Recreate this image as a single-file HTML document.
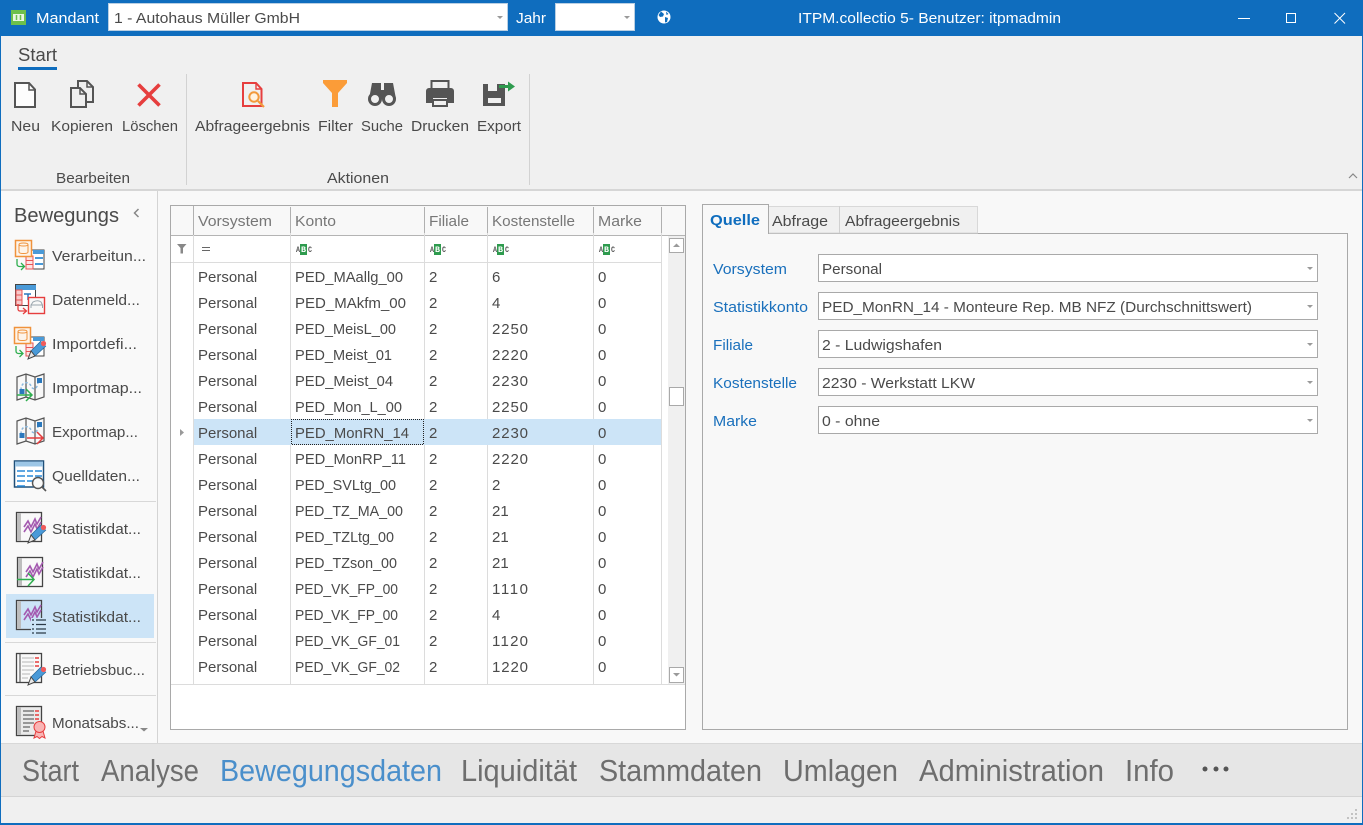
<!DOCTYPE html>
<html lang="de"><head><meta charset="utf-8"><title>ITPM.collectio 5</title>
<style>
html,body{margin:0;padding:0;background:#f8f8f8;overflow:hidden}
svg{display:block;font-family:"Liberation Sans",sans-serif;font-size:15px}
text{fill:#4a4a4a}
.h text{fill:#777}
.b text{fill:#1a70bc}
.w text{fill:#fff}
.n text{font-size:31px;fill:#6e6e6e}
.m text{font-family:"Liberation Mono",monospace;font-size:8px;font-weight:bold;fill:#555}
</style></head><body>
<svg width="1363" height="825" viewBox="0 0 1363 825" xmlns="http://www.w3.org/2000/svg">
<defs>
<path id="tri" d="M0 0h6l-3 3z" fill="#9a9a9a"/>
<g id="pencil"><path d="M1 16l2-6L13 0l5 5L7 15z" fill="#4a9ad8"/><path d="M3 10l10-10M7 15l11-10" stroke="#2a6a9e" stroke-width=".8" fill="none"/><path d="M0 18l3-8 4 5z" fill="#e8e8e8" stroke="#444" stroke-width="1"/><circle cx="15.500" cy="2.500" r="2.600" fill="#f05a5a"/></g>
<g id="chart"><path d="M1 12l4-6 3 6 4-8 2 5 4-7" fill="none" stroke="#a45ab0" stroke-width="1.600"/><path d="M1 17l4-6 3 6 4-8 2 5 4-7" fill="none" stroke="#a45ab0" stroke-width="1.600"/></g>
<g id="map"><path d="M1 4l9-3 9 3 9-3v23l-9 3-9-3-9 3z" fill="#f8f8f8" stroke="#555" stroke-width="1.200"/><path d="M10 1v23M19 4v23" stroke="#555" stroke-width="1.200"/><path d="M5 17c0-9 8-9 10-4s7 3 7-5" fill="none" stroke="#8ab8de" stroke-width="1.500" stroke-dasharray="2.500 2"/><rect x="3.500" y="16" width="5" height="5" fill="#2a78bd"/><rect x="21" y="5" width="5" height="5" fill="#2a78bd"/></g>
</defs>

<!-- chrome -->
<rect width="1363" height="825" fill="#0f6dbe"/>
<rect x="1" y="36" width="1361" height="787" fill="#f8f8f8"/>
<rect x="1" y="36" width="1361" height="153" fill="#f0f0f0"/>
<rect x="1" y="189" width="1361" height="2" fill="#d6d6d6"/>

<!-- title bar -->
<rect x="11" y="10" width="15" height="15" fill="#6dc04b"/>
<rect x="13" y="14" width="11" height="7" fill="#e9f6e2"/><path d="M16.500 15v5M20.500 15v5" stroke="#6dc04b" stroke-width="1.500"/>
<g class="w"><text x="36" y="23" textLength="63" lengthAdjust="spacingAndGlyphs">Mandant</text><text x="516" y="23" textLength="30" lengthAdjust="spacingAndGlyphs">Jahr</text>
<text x="798" y="23" textLength="263" lengthAdjust="spacingAndGlyphs">ITPM.collectio 5- Benutzer: itpmadmin</text></g>
<rect x="108.500" y="3.500" width="399" height="27" fill="#fff" stroke="#b9cfe3"/>
<text x="114" y="23" textLength="186" lengthAdjust="spacingAndGlyphs">1 - Autohaus Müller GmbH</text>
<use href="#tri" x="497" y="16"/>
<rect x="555.500" y="3.500" width="79" height="27" fill="#fff" stroke="#b9cfe3"/>
<use href="#tri" x="624" y="16"/>
<circle cx="664" cy="17" r="6.500" fill="#fff"/>
<path d="M661 11.500l3 2.500-1 2.500-3 .5-1.500-2zM665 17l3 1-1 4-2 .5zM666 11.500l2.500 2.500-2 1z" fill="#0f6dbe"/>
<path d="M1238 18.500h12" stroke="#fff"/>
<rect x="1286.500" y="13.500" width="9" height="9" fill="none" stroke="#fff"/>
<path d="M1334.500 13l10.500 10.500M1345 13l-10.500 10.500" stroke="#fff" fill="none"/>

<!-- ribbon -->
<text x="18" y="61" style="font-size:18px" textLength="39" lengthAdjust="spacingAndGlyphs">Start</text>
<rect x="18" y="67" width="39" height="3" fill="#0f6dbe"/>
<rect x="186" y="74" width="1" height="111" fill="#d2d2d2"/>
<rect x="529" y="74" width="1" height="111" fill="#d2d2d2"/>
<g>
<text x="11" y="131" textLength="29" lengthAdjust="spacingAndGlyphs">Neu</text>
<text x="51" y="131" textLength="62" lengthAdjust="spacingAndGlyphs">Kopieren</text>
<text x="122" y="131" textLength="56" lengthAdjust="spacingAndGlyphs">Löschen</text>
<text x="195" y="131" textLength="115" lengthAdjust="spacingAndGlyphs">Abfrageergebnis</text>
<text x="318" y="131" textLength="35" lengthAdjust="spacingAndGlyphs">Filter</text>
<text x="361" y="131" textLength="42" lengthAdjust="spacingAndGlyphs">Suche</text>
<text x="411" y="131" textLength="58" lengthAdjust="spacingAndGlyphs">Drucken</text>
<text x="477" y="131" textLength="44" lengthAdjust="spacingAndGlyphs">Export</text>
<text x="56" y="183" textLength="74" lengthAdjust="spacingAndGlyphs">Bearbeiten</text>
<text x="327" y="183" textLength="62" lengthAdjust="spacingAndGlyphs">Aktionen</text>
</g>
<!-- new -->
<path d="M15 83h14l6 6.500V107H15z" fill="#fdfdfd" stroke="#555" stroke-width="2"/><path d="M29 83v7h6" fill="none" stroke="#555" stroke-width="1.500"/>
<!-- copy -->
<path d="M78 81h9l6 6v15H78z" fill="#f0f0f0" stroke="#555" stroke-width="2"/><path d="M87 81v6h6" fill="none" stroke="#555" stroke-width="1.500"/>
<path d="M71 88h9l6 6v13H71z" fill="#f0f0f0" stroke="#555" stroke-width="2"/><path d="M80 88v6h6" fill="none" stroke="#555" stroke-width="1.500"/>
<!-- delete -->
<path d="M138.500 84.500l21 21M159.500 84.500l-21 21" stroke="#e63e3e" stroke-width="3.600" fill="none"/>
<!-- query result -->
<path d="M243 83h13l5.500 6v17H243z" fill="none" stroke="#e63e3e" stroke-width="2"/><path d="M256 83v6h5.500" fill="none" stroke="#e63e3e" stroke-width="1.400"/>
<circle cx="254" cy="97" r="4.700" fill="#fff3e0" stroke="#f29a3c" stroke-width="2"/><path d="M258 101l6 6" stroke="#f29a3c" stroke-width="2.200"/>
<!-- filter -->
<path d="M323 80h24v3l-9 10v14h-6V93l-9-10z" fill="#fb9c38"/>
<!-- binoculars -->
<path d="M372 83h9v7h3v-7h9l3 16h-27z" fill="#555"/>
<circle cx="375" cy="99" r="5.500" fill="#f0f0f0" stroke="#555" stroke-width="3"/><circle cx="389" cy="99" r="5.500" fill="#f0f0f0" stroke="#555" stroke-width="3"/>
<!-- printer -->
<rect x="431.500" y="81" width="17" height="8" fill="none" stroke="#555" stroke-width="2"/>
<path d="M429 88h22a3 3 0 0 1 3 3v12h-7v-5h-14v5h-7V91a3 3 0 0 1 3-3z" fill="#555"/>
<rect x="433" y="100" width="14" height="6" fill="none" stroke="#555" stroke-width="2"/>
<!-- export -->
<path d="M483 84h22v22h-22zM488 84v7h9v-7zM488 98v5h13v-5z" fill="#555" fill-rule="evenodd"/>
<path d="M499 85h9v-3.500l7 5-7 5V88h-9z" fill="#2e9b4e"/>
<path d="M1349 178l4-4 4 4" fill="none" stroke="#888" stroke-width="1.200"/>

<!-- sidebar -->
<rect x="1" y="191" width="156" height="552" fill="#f9f9f9"/>
<rect x="157" y="191" width="1" height="552" fill="#d4d4d4"/>
<text x="14" y="222" style="font-size:20px" textLength="105" lengthAdjust="spacingAndGlyphs">Bewegungs</text>
<path d="M138.500 209l-4 4 4 4" fill="none" stroke="#888" stroke-width="1.500"/>
<rect x="5" y="501" width="151" height="1" fill="#d8d8d8"/>
<rect x="5" y="642" width="151" height="1" fill="#d8d8d8"/>
<rect x="5" y="695" width="151" height="1" fill="#d8d8d8"/>
<rect x="6" y="594" width="148" height="44" fill="#cce4f7"/>
<g>
<text x="52" y="261" textLength="94" lengthAdjust="spacingAndGlyphs">Verarbeitun...</text>
<text x="52" y="305" textLength="88" lengthAdjust="spacingAndGlyphs">Datenmeld...</text>
<text x="52" y="349" textLength="85" lengthAdjust="spacingAndGlyphs">Importdefi...</text>
<text x="52" y="393" textLength="90" lengthAdjust="spacingAndGlyphs">Importmap...</text>
<text x="52" y="437" textLength="86" lengthAdjust="spacingAndGlyphs">Exportmap...</text>
<text x="52" y="481" textLength="88" lengthAdjust="spacingAndGlyphs">Quelldaten...</text>
<text x="52" y="534" textLength="89" lengthAdjust="spacingAndGlyphs">Statistikdat...</text>
<text x="52" y="578" textLength="89" lengthAdjust="spacingAndGlyphs">Statistikdat...</text>
<text x="52" y="622" textLength="89" lengthAdjust="spacingAndGlyphs">Statistikdat...</text>
<text x="52" y="675" textLength="93" lengthAdjust="spacingAndGlyphs">Betriebsbuc...</text>
<text x="52" y="728" textLength="87" lengthAdjust="spacingAndGlyphs">Monatsabs...</text>
</g>
<path d="M140 728h8l-4 3.500z" fill="#888"/>

<!-- icon 1 Verarbeitung -->
<g fill="none">
<rect x="26" y="250" width="18" height="19" fill="#fff" stroke="#444"/><rect x="33" y="250" width="11" height="4" fill="#4a9ad8"/>
<rect x="26" y="256" width="7" height="13" fill="#fde4e4" stroke="#e85555"/><path d="M26 260.500h7M26 264.500h7" stroke="#e85555"/>
<path d="M35 258h8M35 264h8" stroke="#4a9ad8" stroke-width="2"/>
<rect x="15.500" y="240.500" width="16" height="16" fill="#fdf4ea" stroke="#f0923b" stroke-width="1.500"/>
<path d="M19 244.500c0-2 9-2 9 0v7.500c0 2-9 2-9 0zM19 244.500c0 2 9 2 9 0" stroke="#f0923b"/>
<path d="M17 259v5c0 1.500 1 2.500 2.500 2.500H24M21 263l3.500 3.500L21 270" stroke="#2fae4f" stroke-width="1.300"/>
</g>
<!-- icon 2 Datenmeld -->
<g fill="none">
<rect x="15.500" y="284.500" width="20" height="21" fill="#fff" stroke="#444"/><rect x="16" y="285" width="20" height="5" fill="#4a9ad8"/>
<rect x="16" y="290" width="6" height="15" fill="#f7c9c9" stroke="#e85555"/><path d="M16 295h6M16 300h6" stroke="#e85555"/>
<path d="M24 294h7M28 294v6" stroke="#2a78bd" stroke-width="1.500"/>
<rect x="28.500" y="297.500" width="16" height="16" fill="#f8f8f8" stroke="#e63e3e" stroke-width="1.400"/>
<path d="M31 308v-3l2-3c3-1.500 6-1.500 8 0l1.500 3v3M31 305h11.500" stroke="#9aa6ae"/>
<path d="M18 304v5c0 1 .8 2 2 2h6M23 308l3.500 3-3.500 3" stroke="#e63e3e" stroke-width="1.300"/>
</g>
<!-- icon 3 Importdef -->
<g fill="none">
<rect x="26" y="337" width="18" height="19" fill="#fff" stroke="#444"/><rect x="33" y="337" width="11" height="4" fill="#4a9ad8"/>
<rect x="26" y="343" width="7" height="13" fill="#fde4e4" stroke="#e85555"/><path d="M26 347.500h7M26 351.500h7" stroke="#e85555"/>
<rect x="14.500" y="327.500" width="16" height="16" fill="#fdf4ea" stroke="#f0923b" stroke-width="1.500"/>
<path d="M18 331.500c0-2 9-2 9 0v7.500c0 2-9 2-9 0zM18 331.500c0 2 9 2 9 0" stroke="#f0923b"/>
<path d="M16 346v5c0 1.500 1 2.500 2.500 2.500H23M19.500 350l3.500 3.500-3.500 3.500" stroke="#2fae4f" stroke-width="1.300"/>
</g>
<use href="#pencil" x="28" y="341"/>
<!-- icon 4 Importmap -->
<use href="#map" x="16" y="373"/>
<path d="M17 395h14M26 389l6 6-6 6" fill="none" stroke="#2fae4f" stroke-width="1.500"/>
<!-- icon 5 Exportmap -->
<use href="#map" x="16" y="417"/>
<path d="M27 438h15M37 432l6 6-6 6" fill="none" stroke="#e63e3e" stroke-width="1.500"/>
<!-- icon 6 Quelldaten -->
<rect x="14.500" y="461" width="29" height="26" fill="#fff" stroke="#1f4f78" stroke-width="1.500"/>
<rect x="15" y="461.500" width="28" height="5" fill="#9cc6e6"/>
<path d="M17 471h8M27 471h6M35 471h7M17 476h8M27 476h6M35 476h7M17 481h8M27 481h6M17 486h8" stroke="#2a8ad8" stroke-width="1.500" fill="none"/>
<circle cx="38" cy="483" r="5.500" fill="#f9f9f9" stroke="#555" stroke-width="1.400"/><path d="M42 487l4 4" stroke="#555" stroke-width="1.600"/>
<!-- icon 7 -->
<rect x="16.500" y="512.500" width="25" height="29" fill="#f9f9f9" stroke="#444" stroke-width="1.300"/><rect x="17" y="513" width="4" height="28" fill="#bdbdbd"/>
<use href="#chart" x="23" y="515"/><use href="#pencil" x="28" y="525"/>
<!-- icon 8 -->
<rect x="17.500" y="557.500" width="25" height="29" fill="#f9f9f9" stroke="#444" stroke-width="1.300"/><rect x="18" y="558" width="4" height="28" fill="#bdbdbd"/>
<use href="#chart" x="25" y="560"/>
<path d="M17 579.500h16M28 573l6 6.500-6 6.500" fill="none" stroke="#2fae4f" stroke-width="1.500"/>
<!-- icon 9 -->
<rect x="16.500" y="600.500" width="25" height="29" fill="#cce4f7" stroke="#444" stroke-width="1.300"/><rect x="17" y="601" width="4" height="28" fill="#bdbdbd"/>
<use href="#chart" x="23" y="603"/>
<rect x="31" y="618" width="16" height="16" fill="#cce4f7"/>
<path d="M32 620h2M36 620h10M32 624.500h2M36 624.500h10M32 629h2M36 629h10M32 633h2M36 633h10" stroke="#2b3a47" stroke-width="1.300"/>
<!-- icon 10 -->
<rect x="16.500" y="653.500" width="25" height="29" fill="#f9f9f9" stroke="#444" stroke-width="1.300"/><path d="M20 654v28" stroke="#444"/>
<path d="M22 658h12M22 662h12M22 666h12M22 670h12M22 674h8M22 678h6" stroke="#c4c4c4" stroke-width="1.200"/>
<path d="M35 658h4M35 662h4M35 666h4" stroke="#e63e3e" stroke-width="1.400"/>
<use href="#pencil" x="28" y="667"/>
<!-- icon 11 -->
<rect x="16.500" y="706.500" width="25" height="29" fill="#eaeaea" stroke="#444" stroke-width="1.300"/><rect x="17" y="707" width="4" height="28" fill="#bdbdbd"/>
<path d="M23 711h11M23 715h11M23 719h11M23 723h11M23 727h7M23 731h6" stroke="#666" stroke-width="1.200"/>
<path d="M35 711h4M35 715h4M35 719h4" stroke="#e63e3e" stroke-width="1.400"/>
<path d="M36 731l-2 7 3-1.500 2.500 2 2.500-2 3 1.500-2-7z" fill="#f9b5b5" stroke="#e63e3e"/>
<circle cx="39.500" cy="727" r="5.500" fill="#f9b5b5" stroke="#e63e3e"/>

<!-- grid -->
<rect x="170.500" y="205.500" width="515" height="524" fill="#fff" stroke="#a9a9a9"/>
<rect x="171" y="206" width="514" height="29" fill="#f8f8f8"/>
<rect x="171" y="235" width="514" height="1" fill="#b4b4b4"/>
<rect x="171" y="262" width="491" height="1" fill="#dcdcdc"/>
<rect x="171" y="684" width="514" height="1" fill="#dcdcdc"/>
<path d="M193.500 206v478M290.500 207v477M424.500 207v477M487.500 207v477M593.500 207v477M661.500 207v477" stroke="#dcdcdc" fill="none"/>
<path d="M193.500 206v29M290.500 207v26M424.500 207v26M487.500 207v26M593.500 207v26M661.500 207v26" stroke="#b0b0b0" fill="none"/>
<g class="h">
<text x="198" y="226" textLength="74" lengthAdjust="spacingAndGlyphs">Vorsystem</text>
<text x="295" y="226" textLength="41" lengthAdjust="spacingAndGlyphs">Konto</text>
<text x="429" y="226" textLength="40" lengthAdjust="spacingAndGlyphs">Filiale</text>
<text x="492" y="226" textLength="83" lengthAdjust="spacingAndGlyphs">Kostenstelle</text>
<text x="598" y="226" textLength="44" lengthAdjust="spacingAndGlyphs">Marke</text>
</g>
<path d="M177 244h9.500l-3.500 4v5.500h-2.500V248z" fill="#888"/>
<path d="M202 247.500h8M202 250.500h8" stroke="#666" fill="none"/>
<g class="m">
<rect x="300" y="244" width="7" height="11" fill="#2e9b4e"/><text x="296" y="252" textLength="4" lengthAdjust="spacingAndGlyphs">A</text><text x="301" y="252" textLength="5" lengthAdjust="spacingAndGlyphs" style="fill:#fff">B</text><text x="308" y="252" textLength="4" lengthAdjust="spacingAndGlyphs">C</text>
<rect x="434" y="244" width="7" height="11" fill="#2e9b4e"/><text x="430" y="252" textLength="4" lengthAdjust="spacingAndGlyphs">A</text><text x="435" y="252" textLength="5" lengthAdjust="spacingAndGlyphs" style="fill:#fff">B</text><text x="442" y="252" textLength="4" lengthAdjust="spacingAndGlyphs">C</text>
<rect x="497" y="244" width="7" height="11" fill="#2e9b4e"/><text x="493" y="252" textLength="4" lengthAdjust="spacingAndGlyphs">A</text><text x="498" y="252" textLength="5" lengthAdjust="spacingAndGlyphs" style="fill:#fff">B</text><text x="505" y="252" textLength="4" lengthAdjust="spacingAndGlyphs">C</text>
<rect x="603" y="244" width="7" height="11" fill="#2e9b4e"/><text x="599" y="252" textLength="4" lengthAdjust="spacingAndGlyphs">A</text><text x="604" y="252" textLength="5" lengthAdjust="spacingAndGlyphs" style="fill:#fff">B</text><text x="611" y="252" textLength="4" lengthAdjust="spacingAndGlyphs">C</text>
</g>
<rect x="194" y="419" width="467" height="26" fill="#cce4f7"/>
<rect x="291.500" y="419.500" width="132" height="25" fill="none" stroke="#222" stroke-dasharray="1 1" stroke-dashoffset=".5"/>
<path d="M180 429l4 3.500-4 3.500z" fill="#999"/>
<g>
<text x="198" y="282">Personal</text><text x="295" y="282" textLength="108" lengthAdjust="spacingAndGlyphs">PED_MAallg_00</text><text x="429" y="282">2</text><text x="492" y="282">6</text><text x="598" y="282">0</text>
<text x="198" y="308">Personal</text><text x="295" y="308" textLength="111" lengthAdjust="spacingAndGlyphs">PED_MAkfm_00</text><text x="429" y="308">2</text><text x="492" y="308">4</text><text x="598" y="308">0</text>
<text x="198" y="334">Personal</text><text x="295" y="334" textLength="101" lengthAdjust="spacingAndGlyphs">PED_MeisL_00</text><text x="429" y="334">2</text><text x="492" y="334" textLength="36" lengthAdjust="spacing">2250</text><text x="598" y="334">0</text>
<text x="198" y="360">Personal</text><text x="295" y="360" textLength="97" lengthAdjust="spacingAndGlyphs">PED_Meist_01</text><text x="429" y="360">2</text><text x="492" y="360" textLength="36" lengthAdjust="spacing">2220</text><text x="598" y="360">0</text>
<text x="198" y="386">Personal</text><text x="295" y="386" textLength="98" lengthAdjust="spacingAndGlyphs">PED_Meist_04</text><text x="429" y="386">2</text><text x="492" y="386" textLength="36" lengthAdjust="spacing">2230</text><text x="598" y="386">0</text>
<text x="198" y="412">Personal</text><text x="295" y="412" textLength="107" lengthAdjust="spacingAndGlyphs">PED_Mon_L_00</text><text x="429" y="412">2</text><text x="492" y="412" textLength="36" lengthAdjust="spacing">2250</text><text x="598" y="412">0</text>
<text x="198" y="438">Personal</text><text x="295" y="438" textLength="114" lengthAdjust="spacingAndGlyphs">PED_MonRN_14</text><text x="429" y="438">2</text><text x="492" y="438" textLength="36" lengthAdjust="spacing">2230</text><text x="598" y="438">0</text>
<text x="198" y="464">Personal</text><text x="295" y="464" textLength="111" lengthAdjust="spacingAndGlyphs">PED_MonRP_11</text><text x="429" y="464">2</text><text x="492" y="464" textLength="36" lengthAdjust="spacing">2220</text><text x="598" y="464">0</text>
<text x="198" y="490">Personal</text><text x="295" y="490" textLength="101" lengthAdjust="spacingAndGlyphs">PED_SVLtg_00</text><text x="429" y="490">2</text><text x="492" y="490">2</text><text x="598" y="490">0</text>
<text x="198" y="516">Personal</text><text x="295" y="516" textLength="108" lengthAdjust="spacingAndGlyphs">PED_TZ_MA_00</text><text x="429" y="516">2</text><text x="492" y="516">21</text><text x="598" y="516">0</text>
<text x="198" y="542">Personal</text><text x="295" y="542" textLength="99" lengthAdjust="spacingAndGlyphs">PED_TZLtg_00</text><text x="429" y="542">2</text><text x="492" y="542">21</text><text x="598" y="542">0</text>
<text x="198" y="568">Personal</text><text x="295" y="568" textLength="102" lengthAdjust="spacingAndGlyphs">PED_TZson_00</text><text x="429" y="568">2</text><text x="492" y="568">21</text><text x="598" y="568">0</text>
<text x="198" y="594">Personal</text><text x="295" y="594" textLength="103" lengthAdjust="spacingAndGlyphs">PED_VK_FP_00</text><text x="429" y="594">2</text><text x="492" y="594" textLength="36" lengthAdjust="spacing">1110</text><text x="598" y="594">0</text>
<text x="198" y="620">Personal</text><text x="295" y="620" textLength="103" lengthAdjust="spacingAndGlyphs">PED_VK_FP_00</text><text x="429" y="620">2</text><text x="492" y="620">4</text><text x="598" y="620">0</text>
<text x="198" y="646">Personal</text><text x="295" y="646" textLength="105" lengthAdjust="spacingAndGlyphs">PED_VK_GF_01</text><text x="429" y="646">2</text><text x="492" y="646" textLength="36" lengthAdjust="spacing">1120</text><text x="598" y="646">0</text>
<text x="198" y="672">Personal</text><text x="295" y="672" textLength="105" lengthAdjust="spacingAndGlyphs">PED_VK_GF_02</text><text x="429" y="672">2</text><text x="492" y="672" textLength="36" lengthAdjust="spacing">1220</text><text x="598" y="672">0</text>
</g>
<!-- scrollbar -->
<rect x="662" y="236" width="23" height="448" fill="#fff"/>
<rect x="668" y="236" width="17" height="448" fill="#f0f0f0"/>
<rect x="669.500" y="238.500" width="14" height="14" fill="#fff" stroke="#a9a9a9"/><path d="M673 247l3.500-3.500 3.500 3.500z" fill="#9a9a9a"/>
<rect x="669.500" y="387.500" width="14" height="18" fill="#fff" stroke="#a9a9a9"/>
<rect x="669.500" y="667.500" width="14" height="15" fill="#fff" stroke="#a9a9a9"/><path d="M673 673l3.500 3.500 3.500-3.500z" fill="#9a9a9a"/>

<!-- right pane -->
<rect x="702.500" y="233.500" width="645" height="496" fill="#f8f8f8" stroke="#a9a9a9"/>
<path d="M768.500 233V206.500H977.500V233z" fill="#f0f0f0" stroke="#d8d8d8"/>
<path d="M839.500 206v27" stroke="#d0d0d0"/>
<path d="M702.500 234V204.500H768.500V234" fill="#f8f8f8" stroke="#a9a9a9"/>
<rect x="703" y="232" width="65" height="3" fill="#f8f8f8"/>
<text x="710" y="225" style="fill:#0f6dbe;font-weight:bold" textLength="50" lengthAdjust="spacingAndGlyphs">Quelle</text>
<text x="772" y="226" textLength="56" lengthAdjust="spacingAndGlyphs">Abfrage</text>
<text x="845" y="226" textLength="115" lengthAdjust="spacingAndGlyphs">Abfrageergebnis</text>
<g class="b">
<text x="713" y="274" textLength="74" lengthAdjust="spacingAndGlyphs">Vorsystem</text>
<text x="713" y="312" textLength="95" lengthAdjust="spacingAndGlyphs">Statistikkonto</text>
<text x="713" y="350" textLength="40" lengthAdjust="spacingAndGlyphs">Filiale</text>
<text x="713" y="388" textLength="84" lengthAdjust="spacingAndGlyphs">Kostenstelle</text>
<text x="713" y="426" textLength="44" lengthAdjust="spacingAndGlyphs">Marke</text>
</g>
<g fill="#fff" stroke="#a9a9a9">
<rect x="818.500" y="254.500" width="499" height="27"/><rect x="818.500" y="292.500" width="499" height="27"/><rect x="818.500" y="330.500" width="499" height="27"/><rect x="818.500" y="368.500" width="499" height="27"/><rect x="818.500" y="406.500" width="499" height="27"/>
</g>
<use href="#tri" x="1307" y="267"/><use href="#tri" x="1307" y="305"/><use href="#tri" x="1307" y="343"/><use href="#tri" x="1307" y="381"/><use href="#tri" x="1307" y="419"/>
<text x="822" y="274" textLength="60" lengthAdjust="spacingAndGlyphs">Personal</text>
<text x="822" y="312" textLength="430" lengthAdjust="spacingAndGlyphs">PED_MonRN_14 - Monteure Rep. MB NFZ (Durchschnittswert)</text>
<text x="822" y="350" textLength="120" lengthAdjust="spacingAndGlyphs">2 - Ludwigshafen</text>
<text x="822" y="388" textLength="153" lengthAdjust="spacingAndGlyphs">2230 - Werkstatt LKW</text>
<text x="822" y="426" textLength="58" lengthAdjust="spacingAndGlyphs">0 - ohne</text>

<!-- bottom nav -->
<rect x="1" y="743" width="1361" height="53" fill="#e6e6e6"/>
<rect x="1" y="743" width="1361" height="1" fill="#d8d8d8"/>
<rect x="1" y="796" width="1361" height="1" fill="#d4d4d4"/>
<rect x="1" y="797" width="1361" height="26" fill="#f0f0f0"/>
<g class="n">
<text x="22" y="781" textLength="57" lengthAdjust="spacingAndGlyphs">Start</text>
<text x="101" y="781" textLength="98" lengthAdjust="spacingAndGlyphs">Analyse</text>
<text x="220" y="781" textLength="222" lengthAdjust="spacingAndGlyphs" style="fill:#4a8fcb">Bewegungsdaten</text>
<text x="461" y="781" textLength="116" lengthAdjust="spacingAndGlyphs">Liquidität</text>
<text x="599" y="781" textLength="163" lengthAdjust="spacingAndGlyphs">Stammdaten</text>
<text x="783" y="781" textLength="115" lengthAdjust="spacingAndGlyphs">Umlagen</text>
<text x="919" y="781" textLength="185" lengthAdjust="spacingAndGlyphs">Administration</text>
<text x="1125" y="781" textLength="49" lengthAdjust="spacingAndGlyphs">Info</text>
</g>
<circle cx="1205" cy="769" r="2.500" fill="#555"/><circle cx="1216" cy="769" r="2.500" fill="#555"/><circle cx="1226" cy="769" r="2.500" fill="#555"/>
<g fill="#c2c2c2"><rect x="1355" y="809" width="2" height="2"/><rect x="1351" y="813" width="2" height="2"/><rect x="1355" y="813" width="2" height="2"/><rect x="1347" y="817" width="2" height="2"/><rect x="1351" y="817" width="2" height="2"/><rect x="1355" y="817" width="2" height="2"/></g>
</svg>
</body></html>
